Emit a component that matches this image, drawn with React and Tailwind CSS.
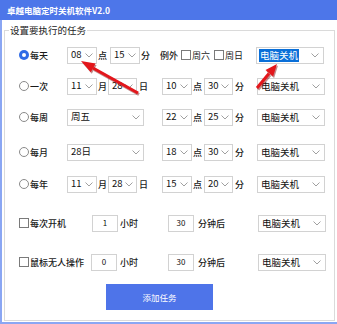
import React from 'react';

function Chevron() {
  return (
    <svg width="8" height="5" viewBox="0 0 8 5" className="shrink-0">
      <polyline points="0.5,0.5 4,4 7.5,0.5" fill="none" stroke="#a0a0a0" strokeWidth="1" />
    </svg>
  );
}

function Combo({ value, className }) {
  return (
    <div className={`flex items-center justify-between h-[17px] border border-[#d2d2d2] pl-[3px] pr-[3px] bg-white ${className}`}>
      <span className="text-[9.5px] leading-none text-[#111]">{value}</span>
      <Chevron />
    </div>
  );
}

function Action({ selected }) {
  return (
    <div className="flex items-center justify-between w-[68px] h-[17px] border border-[#d2d2d2] pl-[2px] pr-[4px] bg-white">
      <span
        className={
          selected
            ? 'text-[9.5px] leading-[13px] px-[1px] bg-[#0a6fd8] text-white'
            : 'text-[9.5px] leading-[13px] px-[1px] text-[#111]'
        }
      >
        电脑关机
      </span>
      <Chevron />
    </div>
  );
}

function Radio({ checked }) {
  if (checked) {
    return (
      <div className="w-[10px] h-[10px] rounded-full bg-[#2f6be6] flex items-center justify-center shrink-0">
        <div className="w-[4px] h-[4px] rounded-full bg-white" />
      </div>
    );
  }
  return <div className="w-[10px] h-[10px] rounded-full border border-[#8a8a8a] bg-white shrink-0" />;
}

function Check() {
  return <div className="w-[10px] h-[10px] border border-[#7a7a7a] bg-white shrink-0" />;
}

function Label({ children, className }) {
  return <span className={`text-[9px] leading-none font-medium text-[#1a1a1a] ${className}`}>{children}</span>;
}

function Box({ value, className }) {
  return (
    <div className={`flex items-center justify-center w-[26px] h-[17px] border border-[#d2d2d2] text-[8px] text-[#111] ${className}`}>
      {value}
    </div>
  );
}

function TimeTail({ h, m }) {
  return (
    <>
      <Combo value={h} className="w-[30px]" />
      <Label className="w-[12px] pl-[1px]">点</Label>
      <Combo value={m} className="w-[29px]" />
      <Label className="w-[24px] pl-[2px]">分</Label>
      <Action />
    </>
  );
}

function Arrows() {
  return (
    <svg className="absolute left-0 top-0 pointer-events-none" width="337" height="324" viewBox="0 0 337 324">
      <g opacity="0.45" transform="translate(1,1.5)">
        <line x1="138" y1="93" x2="93" y2="68" stroke="#7a0000" strokeWidth="3" />
        <polygon points="81,61 95.6,63.5 90.8,72.2" fill="#7a0000" />
        <line x1="257" y1="88" x2="269" y2="73.5" stroke="#7a0000" strokeWidth="3" />
        <polygon points="277,64 273.1,76.4 265.5,70" fill="#7a0000" />
      </g>
      <line x1="138" y1="93" x2="93" y2="68" stroke="#e3161b" strokeWidth="3" />
      <polygon points="81,61 95.6,63.5 90.8,72.2" fill="#e3161b" />
      <line x1="257" y1="88" x2="269" y2="73.5" stroke="#e3161b" strokeWidth="3" />
      <polygon points="277,64 273.1,76.4 265.5,70" fill="#e3161b" />
    </svg>
  );
}

export default function App() {
  return (
    <div className="relative w-[337px] h-[324px] flex flex-col bg-white font-['Noto_Sans_CJK_SC',sans-serif] overflow-hidden">
      <div className="h-[20px] shrink-0 bg-[#4d76e9] flex items-center pl-[7px]">
        <span className="text-[8.5px] font-bold text-white leading-none">卓越电脑定时关机软件V2.0</span>
      </div>

      <div className="flex-1 border-l-2 border-b-2 border-[#8aa6f3]">
        <div className="relative mt-[10px] ml-[2px] w-[331px] h-[291px] border border-[#dadada] pl-[14px]">
          <span className="absolute -top-[7px] left-[4px] bg-white px-[1px] text-[9.5px] leading-[13px] text-[#222]">
            设置要执行的任务
          </span>

          {/* 每天 */}
          <div className="flex items-center h-[18px] mt-[15px]">
            <Radio checked />
            <Label className="w-[37px] ml-[1px] font-bold">每天</Label>
            <Combo value="08" className="w-[30px]" />
            <Label className="w-[13px] pl-[1px]">点</Label>
            <Combo value="15" className="w-[30px]" />
            <Label className="w-[20px] pl-[1px]">分</Label>
            <Label className="w-[21px]">例外</Label>
            <Check />
            <Label className="w-[23px] pl-[1px] font-normal">周六</Label>
            <Check />
            <Label className="w-[32px] pl-[1px] font-normal">周日</Label>
            <Action selected />
          </div>

          {/* 一次 */}
          <div className="flex items-center h-[18px] mt-[13px]">
            <Radio />
            <Label className="w-[37px] ml-[1px]">一次</Label>
            <Combo value="11" className="w-[30px]" />
            <Label className="w-[11px] pl-[1px]">月</Label>
            <Combo value="28" className="w-[29px]" />
            <Label className="w-[25px] pl-[2px]">日</Label>
            <TimeTail h="10" m="30" />
          </div>

          {/* 每周 */}
          <div className="flex items-center h-[18px] mt-[13px]">
            <Radio />
            <Label className="w-[37px] ml-[1px]">每周</Label>
            <Combo value="周五" className="w-[77px]" />
            <div className="w-[18px]" />
            <TimeTail h="22" m="25" />
          </div>

          {/* 每月 */}
          <div className="flex items-center h-[18px] mt-[17px]">
            <Radio />
            <Label className="w-[37px] ml-[1px]">每月</Label>
            <Combo value="28日" className="w-[77px]" />
            <div className="w-[18px]" />
            <TimeTail h="18" m="30" />
          </div>

          {/* 每年 */}
          <div className="flex items-center h-[18px] mt-[14px]">
            <Radio />
            <Label className="w-[37px] ml-[1px]">每年</Label>
            <Combo value="11" className="w-[30px]" />
            <Label className="w-[11px] pl-[1px]">月</Label>
            <Combo value="28" className="w-[29px]" />
            <Label className="w-[25px] pl-[2px]">日</Label>
            <TimeTail h="15" m="20" />
          </div>

          {/* 每次开机 */}
          <div className="flex items-center h-[18px] mt-[21px]">
            <Check />
            <Label className="w-[62px] ml-[1px]">每次开机</Label>
            <Box value="1" />
            <Label className="w-[50px] pl-[2px]">小时</Label>
            <Box value="30" />
            <Label className="w-[64px] pl-[4px]">分钟后</Label>
            <Action />
          </div>

          {/* 鼠标无人操作 */}
          <div className="flex items-center h-[18px] mt-[21px]">
            <Check />
            <Label className="w-[61px] ml-[1px]">鼠标无人操作</Label>
            <Box value="0" />
            <Label className="w-[51px] pl-[3px]">小时</Label>
            <Box value="30" />
            <Label className="w-[64px] pl-[4px]">分钟后</Label>
            <Action />
          </div>

          <button className="mt-[13px] ml-[87px] w-[107px] h-[26px] bg-[#4e74e9] text-white text-[8.5px] flex items-center justify-center">
            添加任务
          </button>
        </div>
      </div>

      <Arrows />
    </div>
  );
}
